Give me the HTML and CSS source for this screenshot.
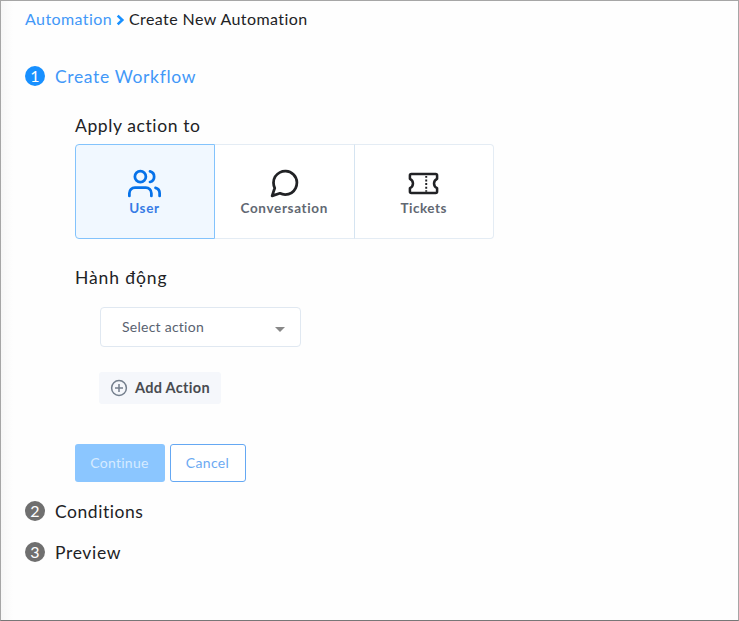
FILE: index.html
```html
<!DOCTYPE html>
<html lang="en">
<head>
<meta charset="utf-8">
<title>Create New Automation</title>
<link rel="stylesheet" href="styles.css">
</head>
<body>
<main class="page">
  <nav class="breadcrumb">
    <a class="crumb-link">Automation</a>
    <svg class="chevron" width="9" height="12" viewBox="0 0 9 12"><path d="M1.7 1.6 6.3 6 1.7 10.4" fill="none" stroke="currentColor" stroke-width="2.6"/></svg>
    <span class="crumb-current">Create New Automation</span>
  </nav>

  <div class="step active"><span class="badge">1</span><span class="step-name create">Create Workflow</span></div>

  <section class="content">
    <h2 class="apply">Apply action to</h2>
    <div class="cards">
      <div class="card selected">
        <svg width="34" height="34" viewBox="0 0 24 24" fill="none" stroke="currentColor" stroke-width="2" stroke-linecap="round" stroke-linejoin="round"><path d="M17 21v-2a4 4 0 0 0-4-4H5a4 4 0 0 0-4 4v2"/><circle cx="9" cy="7" r="4"/><path d="M23 21v-2a4 4 0 0 0-3-3.87M16 3.13a4 4 0 0 1 0 7.75"/></svg>
        <span class="user">User</span>
      </div>
      <div class="card">
        <svg width="34" height="34" viewBox="0 0 24 24" fill="none" stroke="currentColor" stroke-width="2" stroke-linecap="round" stroke-linejoin="round"><path d="M21 11.5a8.38 8.38 0 0 1-.9 3.8 8.5 8.5 0 0 1-7.6 4.7 8.38 8.38 0 0 1-3.8-.9L3 21l1.9-5.7a8.38 8.38 0 0 1-.9-3.8 8.5 8.5 0 0 1 4.7-7.6 8.38 8.38 0 0 1 3.8-.9h.5a8.48 8.48 0 0 1 8 8v.5z"/></svg>
        <span class="conversation">Conversation</span>
      </div>
      <div class="card">
        <svg width="34" height="34" viewBox="0 0 34 34" fill="none" stroke="currentColor" stroke-width="2.6" stroke-linejoin="round"><path d="M4.5 7.3H29.5Q31 7.3 31 8.8V12.2C26.8 14.2 26.8 19.8 31 21.8V25.2Q31 26.7 29.5 26.7H4.5Q3 26.7 3 25.2V21.8C7.2 19.8 7.2 14.2 3 12.2V8.8Q3 7.3 4.5 7.3Z"/><path d="M19.8 9.2V25.5" stroke-width="2" stroke-dasharray="2 1.7"/></svg>
        <span class="tickets">Tickets</span>
      </div>
    </div>

    <h2 class="actions">Hành động</h2>
    <div class="select"><span>Select action</span><i class="caret"></i></div>
    <button class="add"><svg width="18" height="18" viewBox="0 0 18 18" fill="none" stroke="#747f8d" stroke-width="1.5"><circle cx="9" cy="9" r="7.4"/><path d="M9 5v8M5 9h8"/></svg><span>Add Action</span></button>

    <div class="buttons">
      <button class="continue"><span>Continue</span></button>
      <button class="cancel"><span>Cancel</span></button>
    </div>
  </section>

  <div class="step second"><span class="badge">2</span><span class="step-name conditions">Conditions</span></div>
  <div class="step third"><span class="badge">3</span><span class="step-name preview">Preview</span></div>
</main>
</body>
</html>
```
FILE: styles.css
```css
* { box-sizing: border-box; }
body { margin: 0; font-family: Lato, "Noto Sans", sans-serif; color: #212225; }
.page {
  width: 739px; height: 621px; padding: 7px 24px 0;
  border: 1px solid #a6a6a6; border-bottom-color: #777;
  background: linear-gradient(90deg, #f7f7f7 0, #fefefe 12px, #fefefe 100%);
}
.breadcrumb { display: flex; align-items: center; height: 22px; font-size: 16px; letter-spacing: .42px; white-space: nowrap; }
.breadcrumb a, .breadcrumb span { padding-bottom: 2px; }
.crumb-link { width: 87px; color: #4298f8; }
.chevron { margin: 1px 4px 0 4px; color: #1890ff; }
.step { display: flex; align-items: center; height: 24px; font-size: 17.5px; letter-spacing: .65px; }
.step.active { margin-top: 34px; color: #4298f8; }
.conditions { letter-spacing: .55px; }
.badge {
  display: flex; align-items: center; justify-content: center; width: 20px; height: 20px; padding-bottom: 1px;
  margin-right: 10px; border-radius: 50%; background: #6f6f6f; color: #fff; font-size: 16px; letter-spacing: 0;
}
.active .badge { background: #1890ff; }
.content { margin-left: 50px; }
h2 { margin: 0; height: 24px; line-height: 24px; font-size: 17.5px; font-weight: 400; letter-spacing: .6px; }
.apply { margin-top: 26px; }
.cards { display: flex; width: 419px; height: 95px; margin-top: 6px; }
.card {
  display: flex; flex: 1; flex-direction: column; align-items: center; padding-top: 22px;
  border: 1px solid #e4ecf4; border-left-width: 0; background: #fff; color: #212225;
}
.card:first-child { flex: 0 0 140px; }
.card svg { width: 33px; height: 33px; }
.card span { height: 18px; line-height: 17px; color: #626872; font-size: 13.5px; font-weight: 700; letter-spacing: .65px; }
.card .tickets { letter-spacing: .5px; }
.card:first-child { border-radius: 4px 0 0 4px; }
.card:nth-child(2) { border-right-color: #d5e4f1; }
.card:last-child { border-radius: 0 4px 4px 0; }
.card.selected { padding-right: 1px; border: 1px solid #83c3fc; background: #f1f8ff; color: #0672e9; }
.card.selected span { color: #367be5; }
.actions { margin-top: 27px; letter-spacing: .9px; }
.select {
  display: flex; align-items: center; justify-content: space-between; width: 201px; height: 40px;
  margin: 17px 0 0 25px; padding: 0 15px 0 21px; border: 1px solid #e0e8f1; border-radius: 4px;
  background: #fff; color: #596270; font-size: 14px; letter-spacing: .25px;
}
.select span { padding-bottom: 1px; }
.caret { margin-top: 4px; border: 5px solid transparent; border-top-color: #888; border-bottom: 0; }
button { display: flex; align-items: center; padding: 0; border: 0; font-family: inherit; font-size: 14px; }
.add { gap: 7px; width: 122px; height: 32px; margin: 25px 0 0 24px; padding-left: 11px; border-radius: 3px; background: #f5f7fb; color: #484b50; font-size: 14.5px; font-weight: 700; letter-spacing: .3px; }
.add span { padding-bottom: 2px; }
.buttons { display: flex; gap: 5px; margin-top: 40px; }
.buttons button { justify-content: center; height: 38px; border-radius: 3px; letter-spacing: .25px; }
.buttons span { padding-bottom: 2px; }
.buttons .continue { width: 90px; padding-right: 1px; background: #8bc6ff; color: #d6ebff; }
.buttons .cancel { width: 76px; margin-left: -.5px; border: 1px solid #65a8f3; background: #fff; color: #6caaf2; letter-spacing: .35px; }
.second { margin-top: 17px; }
.third { margin-top: 17px; }
```
